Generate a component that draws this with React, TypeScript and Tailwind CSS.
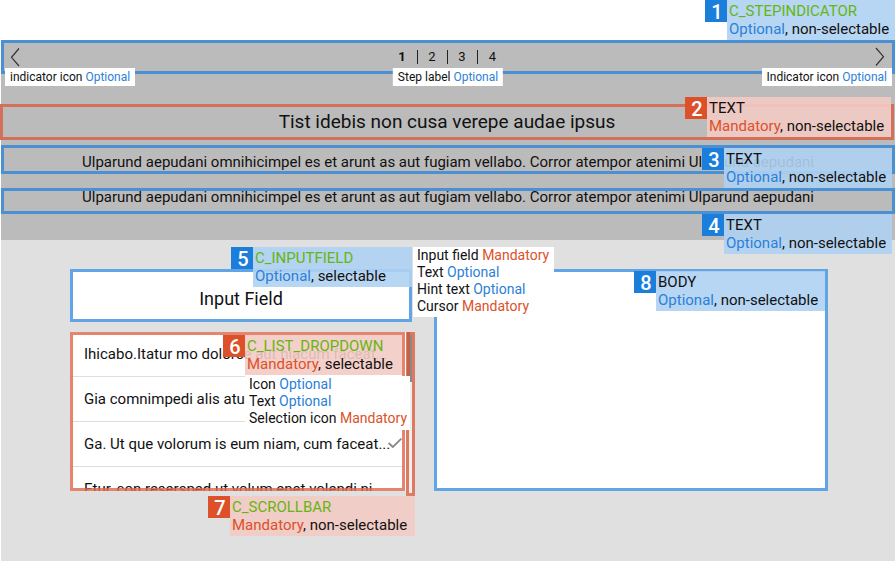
import type { ReactNode } from "react";

type Tone = "blue" | "red";

const badgeTone = { blue: "bg-[#1b7edb]", red: "bg-[#dc512a]" };
const panelTone = { blue: "bg-[#afd2f2]/90", red: "bg-[#f3cbc4]/90" };

function Optional() {
  return <span className="text-[#2c80d8]">Optional</span>;
}

function Mandatory() {
  return <span className="text-[#dc512a]">Mandatory</span>;
}

function Callout({
  n,
  tone,
  title,
  component = false,
  place,
  width,
  children,
}: {
  n: number;
  tone: Tone;
  title: string;
  component?: boolean;
  place: string;
  width: string;
  children: ReactNode;
}) {
  return (
    <aside className={`absolute z-20 flex items-start ${place}`}>
      <span
        className={`flex h-[22px] w-[22px] items-center justify-center pt-0.5 pl-0.5 text-xl font-medium text-white ${badgeTone[tone]}`}
      >
        {n}
      </span>
      <div
        className={`h-10 pt-0.5 pl-0.5 text-[15px] leading-[18px] whitespace-nowrap ${panelTone[tone]} ${width}`}
      >
        <p className={component ? "text-[#66b512]" : ""}>{title}</p>
        <p>{children}</p>
      </div>
    </aside>
  );
}

function Tag({ place, children }: { place: string; children: ReactNode }) {
  return (
    <p
      className={`absolute top-[25px] z-10 h-[18px] bg-white px-[5px] text-xs leading-[18px] whitespace-nowrap ${place}`}
    >
      {children}
    </p>
  );
}

function Chevron({ flip = false }: { flip?: boolean }) {
  return (
    <svg
      viewBox="0 0 10 20"
      className={`h-5 w-2.5 ${flip ? "rotate-180" : ""}`}
      fill="none"
      stroke="#333"
      strokeWidth="1.2"
    >
      <path d="M9 1.500 1.500 10.300 9 19" />
    </svg>
  );
}

const rows = [
  "Ihicabo.Itatur mo dolorce aut hiacum faceat...",
  "Gia comnimpedi alis atur",
  "Ga. Ut que volorum is eum niam, cum faceat...",
  "Etur, con resersped ut volum enet volendi ni...",
];

const sentence =
  "Ulparund aepudani omnihicimpel es et arunt as aut fugiam vellabo. Corror atempor atenimi Ulparund aepudani";

export default function App() {
  return (
    <main className="flex min-h-screen flex-col overflow-hidden bg-white pt-10 pl-px font-['Roboto','Noto_Sans',sans-serif] text-[#111]">
      <header className="bg-[#bbbbbb] pb-[26px]">
        <nav
          aria-label="Steps"
          className="relative flex h-[34px] items-center justify-between border-[3px] border-[#4b90d2] pr-[7px] pl-1.5"
        >
          <button aria-label="Previous step">
            <Chevron />
          </button>
          <ol className="flex items-center divide-x divide-[#222] text-[13px] leading-[14px]">
            <li className="w-[30px] text-center font-bold">1</li>
            <li className="w-[30px] text-center">2</li>
            <li className="w-[30px] text-center">3</li>
            <li className="w-[30px] text-center">4</li>
          </ol>
          <button aria-label="Next step">
            <Chevron flip />
          </button>
          <Tag place="left-px">
            indicator icon <Optional />
          </Tag>
          <Tag place="left-1/2 -translate-x-1/2">
            Step label <Optional />
          </Tag>
          <Tag place="right-0">
            Indicator icon <Optional />
          </Tag>
          <Callout n={1} tone="blue" title="C_STEPINDICATOR" component place="-right-[3px] bottom-[31px]" width="w-[168px]">
            <Optional />, non-selectable
          </Callout>
        </nav>

        <div className="relative mt-[30px] mr-px -ml-px h-9 border-[3px] border-[#d3705a]">
          <h1 className="text-center text-[19px] leading-[30px]">Tist idebis non cusa verepe audae ipsus</h1>
          <Callout n={2} tone="red" title="TEXT" place="right-0 -top-[10px]" width="w-[184px]">
            <Mandatory />, non-selectable
          </Callout>
        </div>

        <div className="relative mt-[5px] h-[29px] border-[3px] border-[#4b90d2]">
          <p className="text-center text-[15px] leading-7 whitespace-nowrap">{sentence}</p>
          <Callout n={3} tone="blue" title="TEXT" place="right-0 top-0" width="w-[168px]">
            <Optional />, non-selectable
          </Callout>
        </div>

        <div className="relative mt-3.5 h-[26px] border-[3px] border-[#4b90d2]">
          <p className="text-center text-[15px] leading-3 whitespace-nowrap">{sentence}</p>
          <Callout n={4} tone="blue" title="TEXT" place="right-0 top-[23px]" width="w-[168px]">
            <Optional />, non-selectable
          </Callout>
        </div>
      </header>

      <section className="grid flex-1 grid-cols-[minmax(0,342fr)_minmax(0,394fr)] items-start gap-x-[22px] bg-[#e0e0e0] pt-[29px] pr-[67px] pb-[65px] pl-[69px]">
        <div className="flex flex-col gap-2.5">
          <div className="relative">
            <input
              aria-label="Input field"
              defaultValue="Input Field"
              className="block h-[53px] w-full border-[3px] border-[#62a5e6] bg-white pt-1.5 text-center text-lg outline-none"
            />
            <Callout n={5} tone="blue" title="C_INPUTFIELD" component place="right-0 -top-[22px]" width="w-[159px]">
              <Optional />, selectable
            </Callout>
            <ul className="absolute -top-[22px] left-full z-10 ml-px h-[70px] w-[141px] bg-white pl-1 text-sm leading-[17px] whitespace-nowrap">
              <li>
                Input field <Mandatory />
              </li>
              <li>
                Text <Optional />
              </li>
              <li>
                Hint text <Optional />
              </li>
              <li>
                Cursor <Mandatory />
              </li>
            </ul>
          </div>

          <div className="relative mr-[-3px] flex items-start">
            <div className="relative h-[159px] min-w-0 flex-1 overflow-hidden bg-white">
              <ul>
                {rows.map((row, i) => (
                  <li key={row} className="border-b border-[#dedede]">
                    <button className="flex h-11 w-full items-center justify-between pt-px pr-[3px] pl-3.5 text-[15px] whitespace-nowrap">
                      {row}
                      {i === 2 && (
                        <svg viewBox="0 0 16 12" className="mb-1 -ml-0.5 h-3 w-3.5 shrink-0" fill="none" stroke="#888" strokeWidth="2">
                          <path d="M.7 6 5.5 10.500 15.300 1" />
                        </svg>
                      )}
                    </button>
                  </li>
                ))}
              </ul>
              <span className="pointer-events-none absolute inset-0 border-[3px] border-[#e0664b]/80" />
            </div>
            <span className="h-[159px] w-px bg-white" />
            <div role="presentation" className="h-[164px] w-[9px] border-[3px] border-[#df7a62] bg-[#eee]">
              <span className="block h-[47px] bg-[#8a8a8a]" />
            </div>
            <span className="absolute top-0 right-[5px] h-11 w-[3px] bg-[#c46148]" />
            <Callout n={6} tone="red" title="C_LIST_DROPDOWN" component place="right-[13px] top-[3px]" width="w-[157px]">
              <Mandatory />, selectable
            </Callout>
            <ul className="absolute top-11 right-[5px] z-10 h-[54px] w-[165px] bg-white pl-1 text-sm leading-[17px] whitespace-nowrap">
              <li>
                Icon <Optional />
              </li>
              <li>
                Text <Optional />
              </li>
              <li>
                Selection icon <Mandatory />
              </li>
            </ul>
            <Callout n={7} tone="red" title="C_SCROLLBAR" component place="right-0 top-[164px]" width="w-[185px]">
              <Mandatory />, non-selectable
            </Callout>
          </div>
        </div>

        <div className="relative h-[222px] border-[3px] border-[#62a5e6] bg-white">
          <Callout n={8} tone="blue" title="BODY" place="right-0 -top-px" width="w-[169px]">
            <Optional />, non-selectable
          </Callout>
        </div>
      </section>
    </main>
  );
}
